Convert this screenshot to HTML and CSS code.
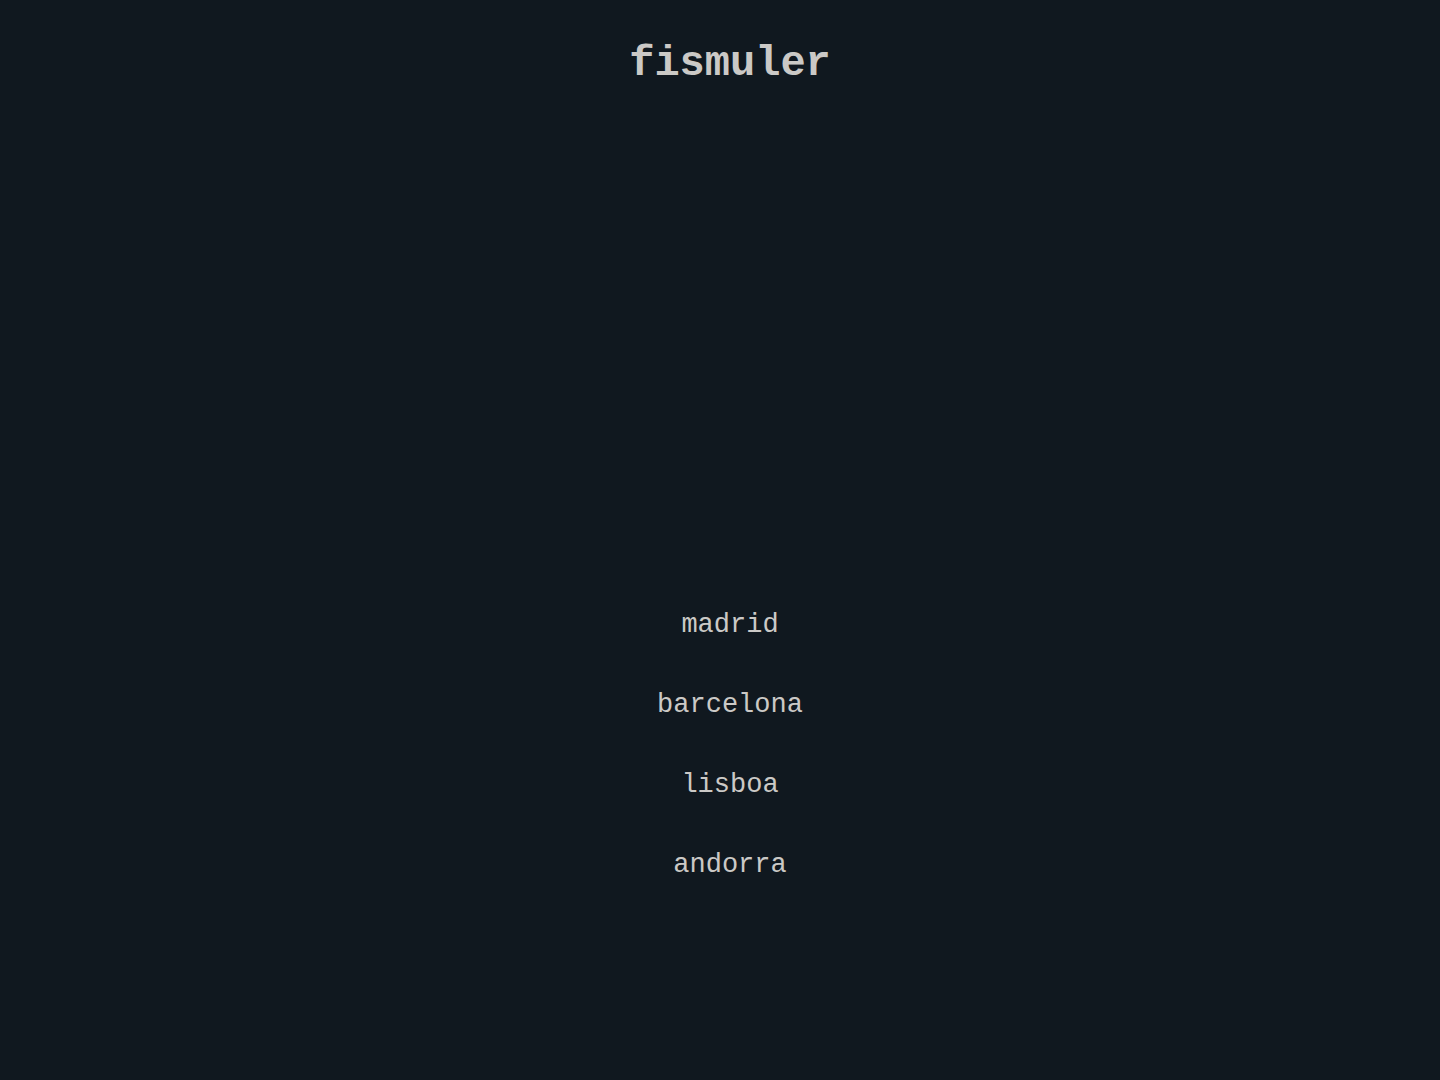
FILE: index.html
```html
<!DOCTYPE html>
<html lang="es">
<head>
    <meta charset="UTF-8">
    <meta name="viewport" content="width=device-width, initial-scale=1.0">
    <title>fismuler</title>
    <link rel="stylesheet" href="styles.css">
</head>
<body>
    <header class="cabecera">
        <h1 class="logo">fismuler</h1>
    </header>
    <main class="contenido">
        <nav class="ciudades" aria-label="Restaurantes">
            <a href="#madrid">madrid</a>
            <a href="#barcelona">barcelona</a>
            <a href="#lisboa">lisboa</a>
            <a href="#andorra">andorra</a>
        </nav>
    </main>
</body>
</html>
```

FILE: styles.css
```css
* {
  box-sizing: border-box;
}

body {
  display: flex;
  flex-direction: column;
  min-height: 100vh;
  margin: 0;
  padding: 42px 0 175px 20px;
  background-color: #10181f;
  color: #cbc9c6;
  font-family: "Liberation Mono", "Courier New", monospace;
}

.cabecera {
  text-align: center;
}

.logo {
  margin: 0;
  font-size: 42px;
  line-height: 44px;
  font-weight: bold;
}

.contenido {
  display: flex;
  flex: 1;
  align-items: flex-end;
  justify-content: center;
}

.ciudades {
  display: flex;
  flex-direction: column;
  align-items: center;
}

.ciudades a {
  color: inherit;
  font-size: 27px;
  line-height: 80px;
  text-decoration: none;
}

.ciudades a:hover {
  color: #ffffff;
}
```
